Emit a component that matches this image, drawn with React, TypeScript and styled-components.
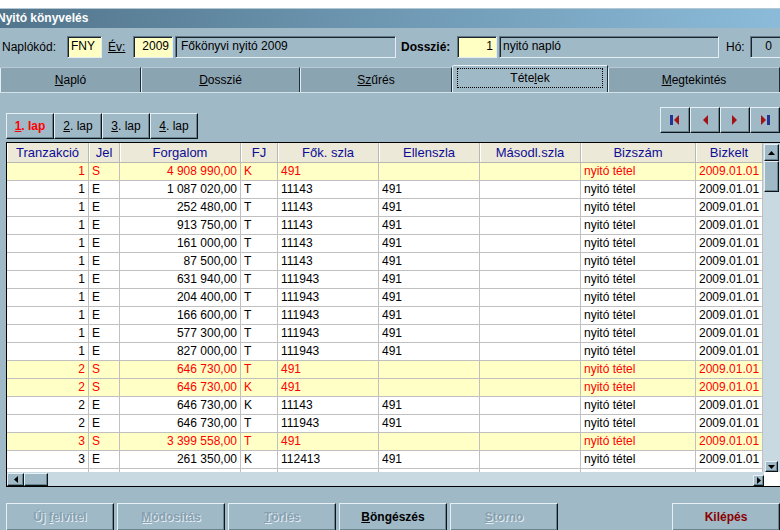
import styled, { createGlobalStyle, css } from "styled-components";

const GlobalStyle = createGlobalStyle`
  html, body { margin: 0; padding: 0; background: #fff; }
  body { font-family: "Liberation Sans", Arial, sans-serif; font-size: 12px; }
  button { font-family: inherit; }
`;

const BG = "#a0b9c7";

const raised = css`
  border: 1px solid;
  border-color: #e6eff3 #0d1418 #0d1418 #e6eff3;
  box-shadow: inset -1px -1px 0 #6b8492;
`;

const sunken = css`
  border: 1px solid;
  border-color: #62798a #e4eef3 #e4eef3 #62798a;
  box-shadow: inset 1px 1px 0 #1a242a;
`;

type Col = { title: string; width: number; right?: boolean };

const columns: Col[] = [
  { title: "Tranzakció", width: 82, right: true },
  { title: "Jel", width: 31 },
  { title: "Forgalom", width: 121, right: true },
  { title: "FJ", width: 37 },
  { title: "Fők. szla", width: 101 },
  { title: "Ellenszla", width: 101 },
  { title: "Másodl.szla", width: 101 },
  { title: "Bizszám", width: 115 },
  { title: "Bizkelt", width: 67 },
];

const template = columns.map((c) => `${c.width}px`).join(" ");

const rows: string[][] = [
  ["1", "S", "4 908 990,00", "K", "491", "", "", "nyitó tétel", "2009.01.01"],
  ["1", "E", "1 087 020,00", "T", "11143", "491", "", "nyitó tétel", "2009.01.01"],
  ["1", "E", "252 480,00", "T", "11143", "491", "", "nyitó tétel", "2009.01.01"],
  ["1", "E", "913 750,00", "T", "11143", "491", "", "nyitó tétel", "2009.01.01"],
  ["1", "E", "161 000,00", "T", "11143", "491", "", "nyitó tétel", "2009.01.01"],
  ["1", "E", "87 500,00", "T", "11143", "491", "", "nyitó tétel", "2009.01.01"],
  ["1", "E", "631 940,00", "T", "111943", "491", "", "nyitó tétel", "2009.01.01"],
  ["1", "E", "204 400,00", "T", "111943", "491", "", "nyitó tétel", "2009.01.01"],
  ["1", "E", "166 600,00", "T", "111943", "491", "", "nyitó tétel", "2009.01.01"],
  ["1", "E", "577 300,00", "T", "111943", "491", "", "nyitó tétel", "2009.01.01"],
  ["1", "E", "827 000,00", "T", "111943", "491", "", "nyitó tétel", "2009.01.01"],
  ["2", "S", "646 730,00", "T", "491", "", "", "nyitó tétel", "2009.01.01"],
  ["2", "S", "646 730,00", "K", "491", "", "", "nyitó tétel", "2009.01.01"],
  ["2", "E", "646 730,00", "K", "11143", "491", "", "nyitó tétel", "2009.01.01"],
  ["2", "E", "646 730,00", "T", "111943", "491", "", "nyitó tétel", "2009.01.01"],
  ["3", "S", "3 399 558,00", "T", "491", "", "", "nyitó tétel", "2009.01.01"],
  ["3", "E", "261 350,00", "K", "112413", "491", "", "nyitó tétel", "2009.01.01"],
  ["", "", "", "", "", "", "", "", ""],
];

const Window = styled.div`
  width: 780px;
  height: 530px;
  overflow: hidden;
  background: ${BG};
  display: flex;
  flex-direction: column;
  color: #000;
`;

const TopStrip = styled.div`
  height: 8px;
  flex-shrink: 0;
  background: #fff;
  border-bottom: 1px solid #b4c8d3;
`;

const TitleBar = styled.div`
  height: 19px;
  flex-shrink: 0;
  background: linear-gradient(to right, #52758c, #8bbbd9);
  color: #fff;
  font-weight: bold;
  font-size: 12px;
  line-height: 19px;
  text-indent: -3px;
  white-space: nowrap;
`;

const HeaderRow = styled.div`
  display: flex;
  align-items: center;
  height: 22px;
  margin-top: 8px;
  flex-shrink: 0;
`;

const Label = styled.div<{ $w: number; $ml?: number; $bold?: boolean }>`
  width: ${(p) => p.$w}px;
  margin-left: ${(p) => p.$ml ?? 0}px;
  flex-shrink: 0;
  font-size: 12px;
  font-weight: ${(p) => (p.$bold ? "bold" : "normal")};
  white-space: nowrap;
`;

const Field = styled.div<{ $w: number; $ml?: number; $yellow?: boolean; $right?: boolean; $pad?: number }>`
  ${sunken};
  box-sizing: border-box;
  width: ${(p) => p.$w}px;
  height: 22px;
  margin-left: ${(p) => p.$ml ?? 0}px;
  flex-shrink: 0;
  background: ${(p) => (p.$yellow ? "#ffffc4" : BG)};
  text-align: ${(p) => (p.$right ? "right" : "left")};
  padding: 0 ${(p) => p.$pad ?? 3}px;
  line-height: 19px;
  font-size: 12px;
  white-space: nowrap;
  overflow: hidden;
`;

const U = styled.span`
  text-decoration: underline;
`;

const TabRow = styled.div`
  display: flex;
  align-items: flex-end;
  height: 27px;
  margin-top: 7px;
  flex-shrink: 0;
  border-bottom: 1px solid #d4e2ea;
`;

const Tab = styled.div<{ $w?: number; $active?: boolean }>`
  box-sizing: border-box;
  ${(p) => (p.$w ? `width: ${p.$w}px;` : "flex: 1;")}
  height: ${(p) => (p.$active ? 27 : 25)}px;
  background: ${(p) => (p.$active ? BG : "#8ba4b2")};
  border-top: 1px solid ${(p) => (p.$active ? "#e8f1f5" : "#b7cad5")};
  border-left: 1px solid #e3eef3;
  border-right: 1px solid #1e2e38;
  border-top-left-radius: 2px;
  display: flex;
  align-items: ${(p) => (p.$active ? "flex-start" : "center")};
  justify-content: center;
  font-size: 12px;
  white-space: nowrap;
`;

const Focus = styled.div`
  box-sizing: border-box;
  width: calc(100% - 8px);
  height: 20px;
  margin-top: 2px;
  border: 1px dotted #000;
  display: flex;
  align-items: center;
  justify-content: center;
`;

const Toolbar = styled.div`
  height: 49px;
  flex-shrink: 0;
  display: flex;
  justify-content: space-between;
  padding-left: 6px;
`;

const PageGroup = styled.div`
  display: flex;
  align-self: flex-end;
  margin-bottom: 3px;
`;

const PageButton = styled.button<{ $active?: boolean }>`
  ${raised};
  box-sizing: border-box;
  width: 48px;
  height: 26px;
  padding: 0;
  background: ${BG};
  font-size: 12px;
  color: ${(p) => (p.$active ? "#ff0000" : "#000")};
  font-weight: ${(p) => (p.$active ? "bold" : "normal")};
`;

const NavGroup = styled.div`
  display: flex;
  align-self: flex-start;
  margin-top: 14px;
`;

const NavButton = styled.button`
  ${raised};
  box-sizing: border-box;
  width: 30px;
  height: 26px;
  padding: 0;
  background: ${BG};
  display: flex;
  align-items: center;
  justify-content: center;
`;

const GridFrame = styled.div`
  box-sizing: border-box;
  width: 775px;
  height: 345px;
  margin-left: 6px;
  flex-shrink: 0;
  border: 1px solid #000;
  display: flex;
  flex-direction: column;
`;

const GridMain = styled.div`
  display: flex;
  height: 329px;
`;

const TableArea = styled.div`
  width: 756px;
  display: flex;
  flex-direction: column;
  background: #fff;
`;

const GridRow = styled.div<{ $hl?: boolean }>`
  display: grid;
  grid-template-columns: ${template};
  background: ${(p) => (p.$hl ? "#ffffc6" : "#fff")};
  color: ${(p) => (p.$hl ? "#ff0000" : "#000")};
`;

const HeadCell = styled.div`
  box-sizing: border-box;
  height: 20px;
  background: #ece9d8;
  border-right: 1px solid #b8b8b0;
  border-bottom: 1px solid #b8b8b0;
  box-shadow: inset 1px 0 0 #fff;
  color: #0c0c96;
  font-size: 13px;
  line-height: 19px;
  text-align: center;
  white-space: nowrap;
  overflow: hidden;
`;

const Body = styled.div`
  height: 309px;
  overflow: hidden;
`;

const Cell = styled.div<{ $right?: boolean }>`
  box-sizing: border-box;
  height: 18px;
  border-right: 1px solid #c0c0c0;
  border-bottom: 1px solid #c0c0c0;
  padding: 0 3px;
  line-height: 17px;
  font-size: 12px;
  text-align: ${(p) => (p.$right ? "right" : "left")};
  white-space: nowrap;
  overflow: hidden;
`;

const VScroll = styled.div`
  width: 17px;
  background: #c8d9e2;
  display: flex;
  flex-direction: column;
  align-items: center;
`;

const ScrollPart = styled.div<{ $w: number; $h: number; $mt?: number }>`
  ${raised};
  box-sizing: border-box;
  width: ${(p) => p.$w}px;
  height: ${(p) => p.$h}px;
  margin-top: ${(p) => p.$mt ?? 0}px;
  flex-shrink: 0;
  background: ${BG};
  display: flex;
  align-items: center;
  justify-content: center;
`;

const Spacer = styled.div`
  flex: 1;
`;

const HScrollRow = styled.div`
  display: flex;
  height: 14px;
`;

const HScroll = styled.div`
  width: 757px;
  background: #c8d9e2;
  display: flex;
  align-items: flex-end;
`;

const Corner = styled.div`
  flex: 1;
  background: #fff;
`;

const BottomBar = styled.div`
  display: flex;
  gap: 3px;
  margin-top: 16px;
  padding-left: 6px;
  flex-shrink: 0;
`;

const ActionButton = styled.button<{ $kind: "disabled" | "normal" | "exit"; $push?: boolean }>`
  ${raised};
  box-sizing: border-box;
  width: 108px;
  height: 28px;
  padding: 0;
  margin-left: ${(p) => (p.$push ? "auto" : "0")};
  background: ${BG};
  font-size: 12px;
  font-weight: bold;
  color: ${(p) => (p.$kind === "exit" ? "#8a0000" : p.$kind === "disabled" ? "#86a0af" : "#000")};
  text-shadow: ${(p) => (p.$kind === "disabled" ? "1px 1px 0 #e4edf2" : "none")};
`;

const BAR = "#25348e";
const TRI = "#a01418";

const NavIcon = ({ kind }: { kind: "first" | "prev" | "next" | "last" }) => (
  <svg width="12" height="10" viewBox="0 0 12 10">
    {kind === "first" && (
      <>
        <rect x="1" y="0" width="3" height="10" fill={BAR} />
        <polygon points="10,0 5,5 10,10" fill={TRI} />
      </>
    )}
    {kind === "prev" && <polygon points="9,0 4,5 9,10" fill={TRI} />}
    {kind === "next" && <polygon points="3,0 8,5 3,10" fill={TRI} />}
    {kind === "last" && (
      <>
        <polygon points="2,0 7,5 2,10" fill={TRI} />
        <rect x="8" y="0" width="3" height="10" fill={BAR} />
      </>
    )}
  </svg>
);

const Arrow = ({ dir }: { dir: "up" | "down" | "left" | "right" }) => {
  const pts = {
    up: "0,4 3.5,0 7,4",
    down: "0,0 3.5,4 7,0",
    left: "4,0 0,3.5 4,7",
    right: "0,0 4,3.5 0,7",
  }[dir];
  const vertical = dir === "up" || dir === "down";
  return (
    <svg width={vertical ? 7 : 4} height={vertical ? 4 : 7}>
      <polygon points={pts} fill="#000" />
    </svg>
  );
};

export default function App() {
  return (
    <>
      <GlobalStyle />
      <Window>
        <TopStrip />
        <TitleBar>Nyitó könyvelés</TitleBar>

        <HeaderRow>
          <Label $w={65} $ml={2}>Naplókód:</Label>
          <Field $w={35} $yellow>FNY</Field>
          <Label $w={25} $ml={6}>
            <U>Év:</U>
          </Label>
          <Field $w={40} $yellow $right>2009</Field>
          <Field $w={221} $ml={2} $pad={5}>Főkönyvi nyitó 2009</Field>
          <Label $w={56} $ml={5} $bold>Dosszié:</Label>
          <Field $w={40} $yellow $right>1</Field>
          <Field $w={220} $ml={2} $pad={3}>nyitó napló</Field>
          <Label $w={24} $ml={7}>Hó:</Label>
          <Field $w={31} $right $pad={8}>0</Field>
        </HeaderRow>

        <TabRow>
          <Tab $w={141}>
            <span><U>N</U>apló</span>
          </Tab>
          <Tab $w={159}>
            <span><U>D</U>osszié</span>
          </Tab>
          <Tab $w={152}>
            <span><U>Sz</U>űrés</span>
          </Tab>
          <Tab $w={156} $active>
            <Focus>
              <span>Téte<U>l</U>ek</span>
            </Focus>
          </Tab>
          <Tab>
            <span><U>M</U>egtekintés</span>
          </Tab>
        </TabRow>

        <Toolbar>
          <PageGroup>
            <PageButton $active><U>1</U>. lap</PageButton>
            <PageButton><U>2</U>. lap</PageButton>
            <PageButton><U>3</U>. lap</PageButton>
            <PageButton><U>4</U>. lap</PageButton>
          </PageGroup>
          <NavGroup>
            <NavButton><NavIcon kind="first" /></NavButton>
            <NavButton><NavIcon kind="prev" /></NavButton>
            <NavButton><NavIcon kind="next" /></NavButton>
            <NavButton><NavIcon kind="last" /></NavButton>
          </NavGroup>
        </Toolbar>

        <GridFrame>
          <GridMain>
            <TableArea>
              <GridRow>
                {columns.map((c) => (
                  <HeadCell key={c.title}>{c.title}</HeadCell>
                ))}
              </GridRow>
              <Body>
                {rows.map((r, i) => (
                  <GridRow key={i} $hl={r[1] === "S"}>
                    {r.map((v, j) => (
                      <Cell key={j} $right={columns[j].right}>
                        {v}
                      </Cell>
                    ))}
                  </GridRow>
                ))}
              </Body>
            </TableArea>
            <VScroll>
              <ScrollPart $w={15} $h={17} $mt={1}>
                <Arrow dir="up" />
              </ScrollPart>
              <ScrollPart $w={15} $h={31} />
              <Spacer />
              <ScrollPart $w={13} $h={11}>
                <Arrow dir="down" />
              </ScrollPart>
            </VScroll>
          </GridMain>
          <HScrollRow>
            <HScroll>
              <ScrollPart $w={17} $h={13}>
                <Arrow dir="left" />
              </ScrollPart>
              <ScrollPart $w={24} $h={13} />
              <Spacer />
              <ScrollPart $w={11} $h={11}>
                <Arrow dir="right" />
              </ScrollPart>
            </HScroll>
            <Corner />
          </HScrollRow>
        </GridFrame>

        <BottomBar>
          <ActionButton $kind="disabled">Új <U>f</U>elvitel</ActionButton>
          <ActionButton $kind="disabled"><U>M</U>ódosítás</ActionButton>
          <ActionButton $kind="disabled"><U>T</U>örlés</ActionButton>
          <ActionButton $kind="normal"><U>B</U>öngészés</ActionButton>
          <ActionButton $kind="disabled"><U>S</U>torno</ActionButton>
          <ActionButton $kind="exit" $push>Kilépés</ActionButton>
        </BottomBar>
      </Window>
    </>
  );
}
